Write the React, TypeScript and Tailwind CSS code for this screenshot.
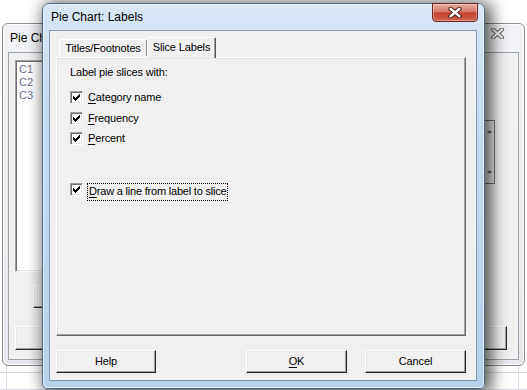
import React from "react";

const classicBtn =
  "flex items-center justify-center bg-[#f0f0f0] border border-t-white border-l-white border-r-[#2a2a2a] border-b-[#2a2a2a] shadow-[inset_-1px_-1px_#a0a0a0,inset_1px_1px_#e8e8e8] text-[11px] leading-[13px] tracking-[-0.15px] text-black";

function CheckBox() {
  return (
    <span className="flex h-[13px] w-[13px] shrink-0 items-center justify-center border border-t-[#a0a0a0] border-l-[#a0a0a0] border-r-white border-b-white bg-white shadow-[inset_1px_1px_#6f6f6f,inset_-1px_-1px_#e3e3e3]">
      <svg width="7" height="7" viewBox="0 0 7 7" shapeRendering="crispEdges">
        <path
          fill="#000"
          d="M6 0h1v1h-1z M5 1h2v1h-2z M0 2h1v1h-1z M4 2h3v1h-3z M0 3h2v1h-2z M3 3h3v1h-3z M0 4h5v1h-5z M1 5h3v1h-3z M2 6h1v1h-1z"
        />
      </svg>
    </span>
  );
}

function CheckRow({ u, rest, className = "" }: { u: string; rest: string; className?: string }) {
  return (
    <div className={"flex h-[13px] items-center gap-[5px] " + className}>
      <CheckBox />
      <span className="text-[11px] leading-[13px] tracking-[-0.15px] text-black">
        <span className="underline underline-offset-[2px]">{u}</span>
        {rest}
      </span>
    </div>
  );
}

export default function App() {
  return (
    <div className="relative h-[390px] w-[527px] overflow-hidden bg-white font-['Liberation_Sans',Arial,sans-serif] text-black">
      {/* spreadsheet grid peeking out at the bottom */}
      <div className="absolute left-0 top-[366px] h-[24px] w-full bg-[image:linear-gradient(to_right,#d6d9de_1px,transparent_1px),linear-gradient(to_bottom,#d6d9de_1px,transparent_1px)] bg-[length:64px_17px] bg-[position:6px_6px]" />

      {/* background dialog (inactive) */}
      <div className="absolute left-[2px] top-[23px] flex h-[343px] w-[523px] flex-col rounded-[6px] border border-[#8c8c8c] bg-[linear-gradient(to_bottom,#f1f3f6,#e5e8ec)] shadow-[inset_0_0_0_1px_rgba(255,255,255,0.85)]">
        <div className="flex h-[28px] items-start justify-between pl-[7px] pr-[20px]">
          <span className="pt-[7px] text-[12px] leading-[14px] text-black">Pie Chart</span>
          <svg width="13" height="11" viewBox="0 0 13 11" className="mt-[4px]">
            <path d="M2 1.5 L11 9.5 M11 1.5 L2 9.5" stroke="#6b6b6b" strokeWidth="4.2" strokeLinecap="round" />
            <path d="M2 1.5 L11 9.5 M11 1.5 L2 9.5" stroke="#f4f4f4" strokeWidth="2.2" strokeLinecap="round" />
          </svg>
        </div>
        <div className="flex flex-1 px-[5px] pb-[5px]">
          <div className="flex flex-1 flex-col border border-[#9da3aa] bg-[#f0f0f0]">
            <div className="flex flex-1">
              <div className="ml-[6px] mt-[7px] flex flex-col">
                <div className="h-[212px] w-[200px] border border-t-[#a0a0a0] border-l-[#a0a0a0] border-r-white border-b-white bg-white pl-[3px] pt-[2px] shadow-[inset_1px_1px_#6f6f6f,inset_-1px_-1px_#e3e3e3]">
                  <div className="text-[11px] leading-[13px] text-[#6d6d8c]">C1</div>
                  <div className="text-[11px] leading-[13px] text-[#6d6d8c]">C2</div>
                  <div className="text-[11px] leading-[13px] text-[#6d6d8c]">C3</div>
                </div>
                <div className={classicBtn + " ml-[18px] mt-[13px] h-[23px] w-[100px]"}>Select</div>
              </div>
              <div className="ml-auto mr-[23px] mt-[67px] flex h-[64px] w-[180px] border border-[#7a7a7a] bg-white">
                <div className="flex-1" />
                <div className="flex w-[11px] flex-col items-center justify-between border-l border-[#9a9a9a] bg-[#ececec] py-[9px]">
                  <svg width="5" height="3" viewBox="0 0 5 3"><path d="M0 3 L2.5 0 L5 3z" fill="#606060" /></svg>
                  <svg width="5" height="3" viewBox="0 0 5 3"><path d="M0 0 L2.5 3 L5 0z" fill="#606060" /></svg>
                </div>
              </div>
            </div>
            <div className="flex justify-between pb-[9px] pl-[6px] pr-[11px]">
              <div className={classicBtn + " h-[24px] w-[100px]"}>Graph</div>
              <div className={classicBtn + " h-[24px] w-[100px]"}>Cancel</div>
            </div>
          </div>
        </div>
      </div>

      {/* front dialog (active) */}
      <div className="absolute left-[42px] top-[3px] flex h-[386px] w-[443px] flex-col rounded-t-[7px] rounded-b-[5px] border border-[#4f6a88] bg-[linear-gradient(to_bottom,#d9e7f6,#c6dbf0_25%,#bcd4ec_70%,#b8d1eb)] shadow-[4px_2px_16px_3px_rgba(0,0,0,0.65),inset_0_0_0_1px_rgba(255,255,255,0.55)]">
        <div className="flex h-[26px] items-start justify-between pl-[8px] pr-[6px]">
          <span className="pt-[6px] text-[12px] leading-[14px] text-black">Pie Chart: Labels</span>
          <div className="-mt-px flex h-[19px] w-[46px] items-center justify-center rounded-b-[4px] border border-[#6e2a22] bg-[linear-gradient(to_bottom,#e9ada2_0%,#d9786a_45%,#c4432f_52%,#cf6150_100%)] shadow-[inset_0_0_0_1px_rgba(255,255,255,0.35)]">
            <svg width="14" height="11" viewBox="0 0 14 11">
              <path d="M2.5 1.8 L11.5 9.2 M11.5 1.8 L2.5 9.2" stroke="#4a1a14" strokeWidth="4.4" strokeLinecap="round" />
              <path d="M2.5 1.8 L11.5 9.2 M11.5 1.8 L2.5 9.2" stroke="#ffffff" strokeWidth="2.4" strokeLinecap="round" />
            </svg>
          </div>
        </div>
        <div className="flex flex-1 pb-[7px] pl-[6px] pr-[7px]">
          <div className="flex flex-1 flex-col border border-[#8497ad] bg-[#f0f0f0] pb-[7px] pl-[6px] pr-[10px]">
            {/* tabs */}
            <div className="relative z-10 flex h-[26px] items-end pl-[3px]">
              <div className="mb-px flex h-[17px] w-[88px] items-center justify-center rounded-t-[2px] border-l border-t border-r border-l-white border-t-white border-r-[#8a8a8a] pt-[1px] text-[11px] leading-[13px] tracking-[-0.15px]">
                Titles/Footnotes
              </div>
              <div className="-mb-[1px] flex h-[21px] w-[69px] items-start justify-center rounded-t-[2px] border-l border-t border-r border-l-white border-t-white border-r-[#555] bg-[#f0f0f0] pt-[3px] text-[11px] leading-[13px] tracking-[-0.15px] shadow-[inset_-1px_0_#a0a0a0]">
                Slice Labels
              </div>
            </div>
            {/* tab panel */}
            <div className="flex h-[279px] flex-col border border-t-white border-l-white border-r-[#696969] border-b-[#696969] pl-[13px] pt-[8px] shadow-[inset_-1px_-1px_#a0a0a0,inset_1px_1px_#e3e3e3]">
              <div className="text-[11px] leading-[13px] tracking-[-0.15px]">Label pie slices with:</div>
              <CheckRow u="C" rest="ategory name" className="mt-[12px]" />
              <CheckRow u="F" rest="requency" className="mt-[8px]" />
              <CheckRow u="P" rest="ercent" className="mt-[7px]" />
              <div className="mt-[38px] flex items-start gap-[4px]">
                <CheckBox />
                <span className="border border-dotted border-black px-[1px] pb-[2px] pt-px text-[11px] leading-[13px] tracking-[-0.2px]">
                  <span className="underline underline-offset-[2px]">D</span>raw a line from label to slice
                </span>
              </div>
            </div>
            {/* buttons */}
            <div className="mt-[14px] flex items-center">
              <div className={classicBtn + " h-[23px] w-[100px]"}>Help</div>
              <div className={classicBtn + " ml-auto h-[23px] w-[101px]"}>
                <span className="underline underline-offset-[2px]">O</span>K
              </div>
              <div className={classicBtn + " ml-[18px] h-[23px] w-[101px]"}>Cancel</div>
            </div>
          </div>
        </div>
      </div>
    </div>
  );
}
